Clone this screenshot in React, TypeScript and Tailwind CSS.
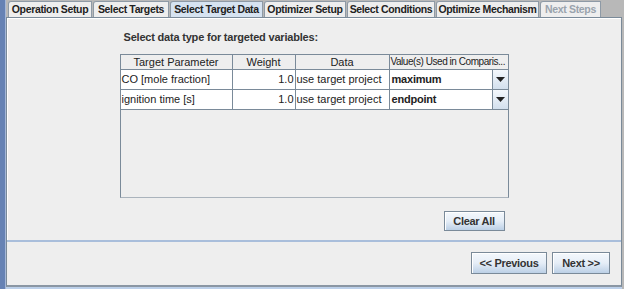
const tabs = [
  { label: "Operation Setup", w: "w-[84px]" },
  { label: "Select Targets", w: "w-[76px]" },
  { label: "Select Target Data", w: "w-[93px]", selected: true },
  { label: "Optimizer Setup", w: "w-[82px]" },
  { label: "Select Conditions", w: "w-[88px]" },
  { label: "Optimize Mechanism", w: "w-[103px]" },
  { label: "Next Steps", w: "w-[61px]", disabled: true },
];

const rows = [
  { param: "CO [mole fraction]", weight: "1.0", data: "use target project", value: "maximum" },
  { param: "ignition time [s]", weight: "1.0", data: "use target project", value: "endpoint" },
];

const MetalButton = ({ label, className }: { label: string; className: string }) => (
  <button
    className={`flex items-center justify-center whitespace-nowrap border border-[#7a8a99] bg-gradient-to-b from-[#f4f8fc] via-[#e6eef7] to-[#bcd0e6] text-[11px] font-bold tracking-[-0.3px] text-[#333] shadow-[inset_1px_1px_0_#fff] ${className}`}
  >
    {label}
  </button>
);

const ComboCell = ({ value }: { value: string }) => (
  <div className="flex h-full w-full items-stretch border-l border-[#7a8a99] bg-white">
    <span className="flex flex-1 items-center pl-[2px] font-bold tracking-[-0.2px] text-[#222]">{value}</span>
    <div className="flex w-[16px] items-center justify-center border-l border-[#7a8a99] bg-gradient-to-b from-[#f4f8fc] to-[#d3e0ee]">
      <svg width="9" height="5" viewBox="0 0 9 5">
        <path d="M0 0h9L4.5 5z" fill="#222" />
      </svg>
    </div>
  </div>
);

const App = () => {
  return (
    <div className="flex h-[289px] w-[624px] bg-[#b8b8b8] font-['Liberation_Sans',Arial,sans-serif] text-[11px] text-[#222]">
      <div className="w-[5px] bg-[#6682b4]" />
      <div className="w-[1px] bg-[#a6b8d8]" />

      <div className="flex flex-1 flex-col pr-[2px]">
        {/* tab strip */}
        <div className="flex h-[17px] items-end gap-[1px] pl-[2px]">
          {tabs.map((t) => (
            <div
              key={t.label}
              className={`flex h-[16px] items-center justify-center overflow-hidden whitespace-nowrap rounded-tl-[3px] border border-b-0 border-[#8e9aa6] text-[10.5px] font-bold tracking-[-0.35px] ${t.w} ${
                t.selected ? "bg-[#d6e3f1]" : "bg-[#eeeeee]"
              } ${t.disabled ? "text-[#9aa3ad]" : "text-[#222]"}`}
            >
              {t.label}
            </div>
          ))}
        </div>

        {/* tab content */}
        <div className="flex h-[225px] flex-col border border-b-0 border-[#7a8a99] bg-[#eeeeee] shadow-[inset_1px_1px_0_#fff]">
          <div className="mx-auto flex w-[389px] flex-1 flex-col pt-[12px]">
            <div className="pl-[4px] font-bold leading-[14px] tracking-[-0.2px] text-[#333]">
              Select data type for targeted variables:
            </div>

            <div className="mt-[10px] flex h-[144px] flex-col border border-[#7a8a99] border-b-[#aab3bc] bg-[#eeeeee]">
              <div className="grid h-[15px] grid-cols-[112px_63px_93px_1fr] border-b border-[#7a8a99] bg-[#eeeeee] leading-[14px]">
                <div className="border-r border-[#7a8a99] text-center">Target Parameter</div>
                <div className="border-r border-[#7a8a99] text-center">Weight</div>
                <div className="text-center">Data</div>
                <div className="whitespace-nowrap border-l border-[#7a8a99] pl-[1px] text-[10px] tracking-[-0.45px]">
                  Value(s) Used in Comparis...
                </div>
              </div>
              {rows.map((r) => (
                <div
                  key={r.param}
                  className="grid h-[20px] grid-cols-[112px_63px_93px_1fr] border-b border-[#7a8a99] bg-white"
                >
                  <div className="flex items-center border-r border-[#7a8a99] pl-[1px]">{r.param}</div>
                  <div className="flex items-center justify-end border-r border-[#7a8a99] pr-[1px]">{r.weight}</div>
                  <div className="flex items-center pl-[1px]">{r.data}</div>
                  <ComboCell value={r.value} />
                </div>
              ))}
            </div>

            <div className="mt-[13px] flex justify-end pr-[4px]">
              <MetalButton label="Clear All" className="h-[20px] w-[61px]" />
            </div>
          </div>
          <div className="h-[2px] bg-[#a9bedb]" />
        </div>

        {/* bottom nav */}
        <div className="flex flex-1 items-start justify-end gap-[5px] border-x border-b-2 border-[#7a8a99] border-b-[#8a96a3] bg-[#eeeeee] pr-[11px] pt-[10px]">
          <MetalButton label="<< Previous" className="h-[22px] w-[76px]" />
          <MetalButton label="Next >>" className="h-[22px] w-[58px]" />
        </div>
        <div className="h-[2px] bg-[#bcd0ea]" />
      </div>
    </div>
  );
};

export default App;
